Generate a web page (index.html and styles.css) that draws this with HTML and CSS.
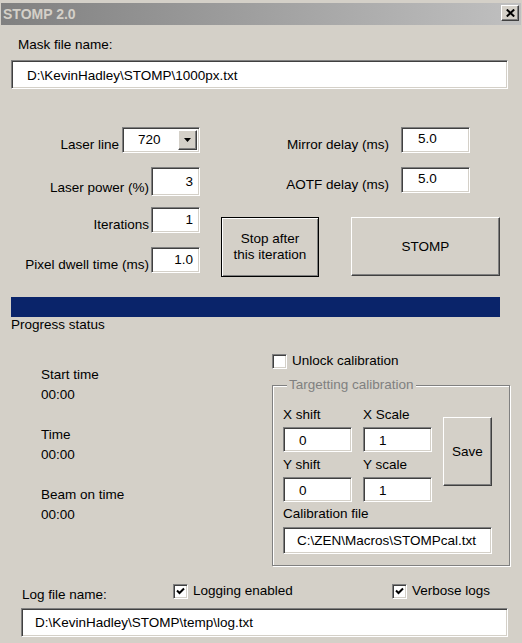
FILE: index.html
```html
<!DOCTYPE html>
<html>
<head>
<meta charset="utf-8">
<title>STOMP 2.0</title>
<link rel="stylesheet" href="styles.css">
</head>
<body>
<div class="window">
  <div class="titlebar">
    <span class="title">STOMP 2.0</span>
    <span class="close"><svg width="9" height="8" viewBox="0 0 9 8"><path d="M0.8 0.5 L8.2 7.5 M8.2 0.5 L0.8 7.5" stroke="#000" stroke-width="2" fill="none"/></svg></span>
  </div>

  <div class="label mask-label">Mask file name:</div>
  <div class="field mask-field">D:\KevinHadley\STOMP\1000px.txt</div>

  <div class="middle">
    <div class="params">
      <div class="prow">
        <span class="plabel laser">Laser line</span>
        <div class="field select">
          <span class="sel-val">720</span>
          <span class="btn sel-btn"><svg width="7" height="4" viewBox="0 0 7 4"><path d="M0 0 H7 L3.5 4 Z" fill="#000"/></svg></span>
        </div>
      </div>
      <div class="prow">
        <span class="plabel">Laser power (%)</span>
        <div class="field num tall">3</div>
      </div>
      <div class="prow">
        <span class="plabel">Iterations</span>
        <div class="field num">1</div>
      </div>
      <div class="prow">
        <span class="plabel">Pixel dwell time (ms)</span>
        <div class="field num">1.0</div>
      </div>
    </div>
    <div class="rightpart">
      <div class="drows">
        <div class="drow">
          <span class="dlabel">Mirror delay (ms)</span>
          <div class="field dfield">5.0</div>
        </div>
        <div class="drow">
          <span class="dlabel">AOTF delay (ms)</span>
          <div class="field dfield">5.0</div>
        </div>
      </div>
      <div class="buttons">
        <div class="btn default stop">Stop after<br>this iteration</div>
        <div class="btn stomp">STOMP</div>
      </div>
    </div>
  </div>

  <div class="progress"></div>
  <div class="status">Progress status</div>

  <div class="lower">
    <div class="times">
      <div class="tblock"><div>Start time</div><div>00:00</div></div>
      <div class="tblock"><div>Time</div><div>00:00</div></div>
      <div class="tblock"><div>Beam on time</div><div>00:00</div></div>
    </div>
    <div class="calib">
      <div class="check unlock"><span class="field cbox"></span><span>Unlock calibration</span></div>
      <fieldset class="group">
        <legend>Targetting calibration</legend>
        <div class="grp-row">
          <div class="grp-grid">
            <span class="glabel">X shift</span>
            <span class="glabel">X Scale</span>
            <div class="field gfield">0</div>
            <div class="field gfield">1</div>
            <span class="glabel">Y shift</span>
            <span class="glabel">Y scale</span>
            <div class="field gfield">0</div>
            <div class="field gfield">1</div>
          </div>
          <div class="btn save">Save</div>
        </div>
        <div class="glabel calib-label">Calibration file</div>
        <div class="field calfile">C:\ZEN\Macros\STOMPcal.txt</div>
      </fieldset>
    </div>
  </div>

  <div class="logrow">
    <span class="loglabel">Log file name:</span>
    <div class="check logging"><span class="field cbox"><svg width="9" height="8" viewBox="0 0 9 8"><path d="M1 3.5 L3.5 6 L8 1.5" stroke="#000" stroke-width="2" fill="none"/></svg></span><span>Logging enabled</span></div>
    <div class="check"><span class="field cbox"><svg width="9" height="8" viewBox="0 0 9 8"><path d="M1 3.5 L3.5 6 L8 1.5" stroke="#000" stroke-width="2" fill="none"/></svg></span><span>Verbose logs</span></div>
  </div>
  <div class="field logfield">D:\KevinHadley\STOMP\temp\log.txt</div>
</div>
</body>
</html>
```

FILE: styles.css
```css
html, body {
  margin: 0;
  padding: 0;
  background: #d4d0c8;
}
body {
  width: 522px;
  height: 643px;
  overflow: hidden;
  font-family: "Liberation Sans", Arial, sans-serif;
  font-size: 13.5px;
  line-height: 16px;
  color: #000;
}
.window {
  width: 522px;
  height: 643px;
  box-sizing: border-box;
}

/* title bar */
.titlebar {
  margin: 3px 1px 0;
  height: 22px;
  padding: 0 2px 0 2px;
  display: flex;
  justify-content: space-between;
  align-items: flex-start;
  background: linear-gradient(to right, #808080, #c0c0c0);
}
.title {
  color: #d4d0c8;
  font-weight: bold;
  font-size: 14px;
  line-height: 22px;
}
.close {
  margin-top: 2px;
  width: 18px;
  height: 16px;
  box-sizing: border-box;
  background: #d4d0c8;
  border: 1px solid;
  border-color: #fff #404040 #404040 #fff;
  box-shadow: inset -1px -1px 0 #808080;
  display: flex;
  align-items: center;
  justify-content: center;
}

/* generic controls */
.field {
  box-sizing: border-box;
  background: #fff;
  border: 1px solid;
  border-color: #808080 #fff #fff #808080;
  box-shadow: inset 1px 1px 0 #404040, inset -1px -1px 0 #d4d0c8;
  display: flex;
  align-items: center;
}
.btn {
  box-sizing: border-box;
  background: #d4d0c8;
  border: 1px solid;
  border-color: #fff #404040 #404040 #fff;
  box-shadow: inset -1px -1px 0 #808080;
  display: flex;
  align-items: center;
  justify-content: center;
  text-align: center;
}
.btn.default {
  border: 1px solid #000;
  box-shadow: inset 1px 1px 0 #fff, inset -1px -1px 0 #808080;
}

/* mask */
.mask-label {
  margin: 12px 0 0 18px;
}
.mask-field {
  margin: 7px 0 0 11px;
  width: 497px;
  height: 29px;
  padding: 2px 0 0 15px;
}

/* middle */
.middle {
  margin-top: 38px;
  display: flex;
  align-items: flex-start;
}
.params {
  width: 200px;
  display: grid;
  grid-auto-rows: 40px;
}
.prow {
  align-self: start;
  display: flex;
  justify-content: flex-end;
  align-items: flex-end;
  gap: 2px;
}
.plabel.laser {
  margin-right: 1px;
}
.num {
  width: 49px;
  height: 26px;
  justify-content: flex-end;
  padding-right: 6px;
}
.num.tall {
  height: 29px;
}
.select {
  width: 78px;
  height: 26px;
  padding: 2px;
  justify-content: space-between;
  align-items: stretch;
}
.sel-val {
  padding-left: 13px;
  line-height: 20px;
}
.sel-btn {
  width: 19px;
}

.rightpart {
  width: 322px;
}
.drows {
  display: grid;
  grid-auto-rows: 40px;
}
.drow {
  align-self: start;
  display: flex;
  align-items: flex-end;
  gap: 12px;
}
.dlabel {
  width: 189px;
  text-align: right;
}
.dfield {
  width: 69px;
  height: 26px;
  padding: 0 0 2px 16px;
}
.buttons {
  margin-top: 10px;
  padding-left: 21px;
  display: flex;
  align-items: flex-start;
  gap: 32px;
}
.stop {
  width: 98px;
  height: 60px;
}
.stomp {
  width: 149px;
  height: 59px;
}

/* progress */
.progress {
  margin: 10px 0 0 11px;
  width: 489px;
  height: 20px;
  background: #0a246a;
}
.status {
  margin-left: 11px;
}

/* lower */
.lower {
  display: flex;
  align-items: flex-start;
}
.times {
  width: 231px;
  padding: 32px 0 0 41px;
  line-height: 20px;
}
.tblock {
  margin-bottom: 20px;
}
.calib {
  width: 250px;
}
.check {
  display: flex;
  align-items: center;
  gap: 5px;
}
.cbox {
  width: 15px;
  height: 15px;
  justify-content: center;
}
.unlock {
  margin-top: 20px;
}
.group {
  margin: 8px 0 0 0;
  width: 238px;
  box-sizing: border-box;
  min-inline-size: 0;
  padding: 14px 17px 11px 10px;
  border: 1px solid #808080;
  box-shadow: inset 1px 1px 0 #fff, 1px 1px 0 #fff;
}
.group legend {
  margin-left: 4px;
  padding: 0 2px;
  color: #808080;
  background: #d4d0c8;
  line-height: 16px;
}
.grp-row {
  display: flex;
  align-items: flex-start;
  gap: 11px;
}
.grp-grid {
  display: grid;
  grid-template-columns: 69px 69px;
  grid-template-rows: 16px 25px 16px 25px;
  column-gap: 11px;
  row-gap: 0;
}
.grp-grid .gfield {
  margin-top: 4px;
}
.grp-grid .glabel:nth-child(5),
.grp-grid .glabel:nth-child(6) {
  margin-top: 5px;
}
.grp-grid {
  grid-template-rows: 16px 29px 21px 29px;
}
.gfield {
  height: 25px;
  padding: 2px 0 0 15px;
}
.save {
  margin-top: 10px;
  width: 49px;
  height: 69px;
}
.calib-label {
  margin-top: 4px;
}
.calfile {
  margin-top: 5px;
  width: 209px;
  height: 27px;
  padding: 1px 0 0 13px;
}

/* log */
.logrow {
  margin: 17px 0 0 22px;
  display: flex;
  align-items: flex-start;
}
.loglabel {
  width: 151px;
  margin-top: 4px;
}
.logging {
  width: 219px;
}
.logfield {
  margin: 5px 0 0 21px;
  width: 487px;
  height: 29px;
  padding: 1px 0 0 13px;
}
```
